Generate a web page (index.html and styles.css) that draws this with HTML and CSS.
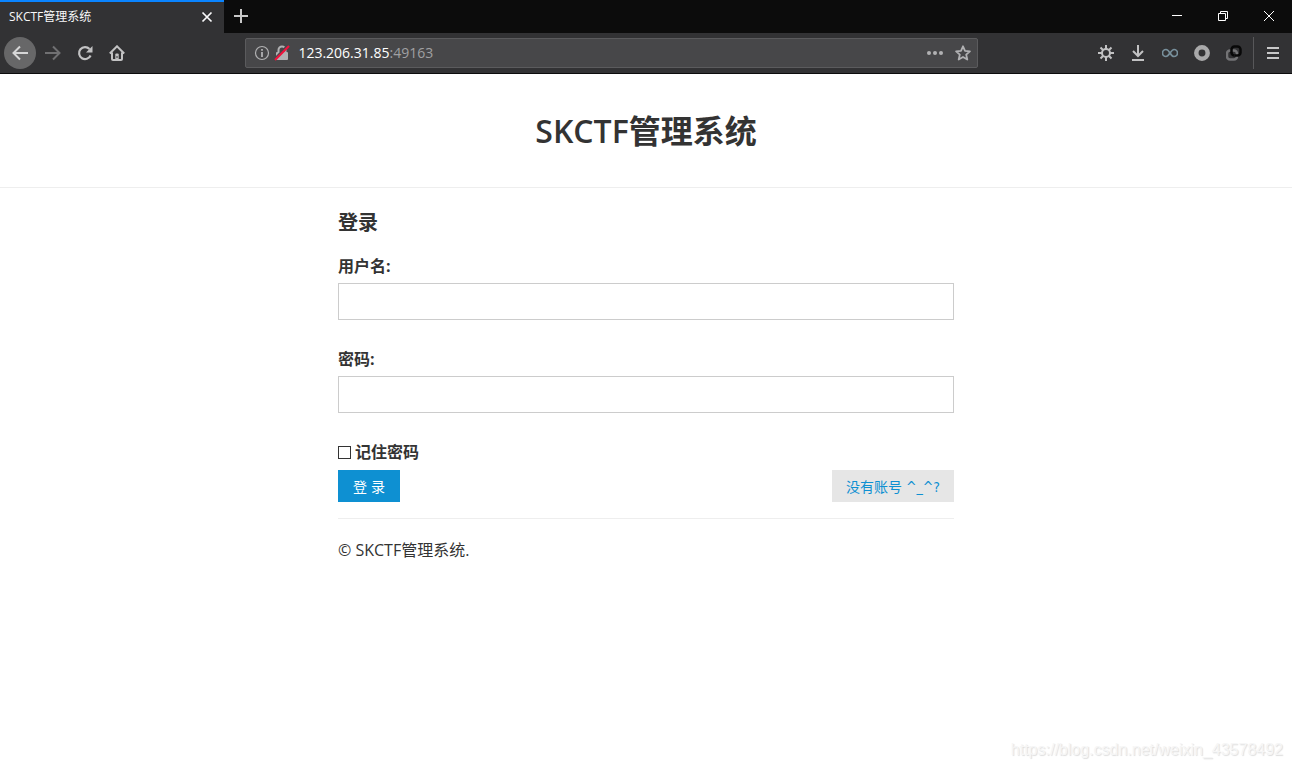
FILE: index.html
```html
<!DOCTYPE html>
<html lang="zh-CN">
<head>
    <meta charset="UTF-8">
    <meta name="viewport" content="width=device-width, initial-scale=1.0">
    <title>SKCTF管理系统</title>
    <link rel="stylesheet" href="styles.css">
</head>
<body>
    <div class="browser">
        <div class="titlebar">
            <div class="tab">
                <span class="tab-title">SKCTF管理系统</span>
                <button type="button" class="icon-btn tab-close" aria-label="关闭标签页">
                    <svg width="16" height="16" viewBox="0 0 16 16"><path d="M3.5 2.5l9 9M12.5 2.5l-9 9" stroke="#f9f9fa" stroke-width="1.7"/></svg>
                </button>
            </div>
            <button type="button" class="icon-btn new-tab" aria-label="新标签页">
                <svg width="16" height="16" viewBox="0 0 16 16"><path d="M8 1v14M1 8h14" stroke="#c8c8c8" stroke-width="2"/></svg>
            </button>
            <div class="window-controls">
                <button type="button" class="icon-btn" aria-label="最小化">
                    <svg width="12" height="12" viewBox="0 0 12 12"><path d="M1 5.5h10" stroke="#fff"/></svg>
                </button>
                <button type="button" class="icon-btn" aria-label="还原">
                    <svg width="12" height="12" viewBox="0 0 12 12"><path d="M1.500 3.500h7v7h-7zM3.500 3.500v-2h7v7h-2" fill="none" stroke="#fff"/></svg>
                </button>
                <button type="button" class="icon-btn" aria-label="关闭">
                    <svg width="12" height="12" viewBox="0 0 12 12"><path d="M1 1l10 10M11 1L1 11" stroke="#fff"/></svg>
                </button>
            </div>
        </div>
        <div class="toolbar">
            <div class="nav-buttons">
                <button type="button" class="icon-btn back" aria-label="后退">
                    <svg width="16" height="16" viewBox="0 0 16 16"><path d="M16 8H1.500M8 1.500L1.500 8 8 14.500" fill="none" stroke="#d6d6d7" stroke-width="2"/></svg>
                </button>
                <button type="button" class="icon-btn" aria-label="前进">
                    <svg width="16" height="16" viewBox="0 0 16 16"><path d="M0 8h14.500M8 1.500L14.500 8 8 14.500" fill="none" stroke="#707072" stroke-width="2"/></svg>
                </button>
                <button type="button" class="icon-btn" aria-label="刷新">
                    <svg width="16" height="16" viewBox="0 0 16 16"><path d="M12.500 4A6 6 0 1 0 13.600 10.500" fill="none" stroke="#c2c2c3" stroke-width="2.200"/><path d="M15.500 1v6.500H9z" fill="#c2c2c3"/></svg>
                </button>
                <button type="button" class="icon-btn" aria-label="主页">
                    <svg width="16" height="16" viewBox="0 0 16 16"><path d="M.8 8.500L8 1.300l7.200 7.200M3 7.500V14a1 1 0 0 0 1 1h8a1 1 0 0 0 1-1V7.500" fill="none" stroke="#c2c2c3" stroke-width="2"/><path d="M6.300 15V9.500a1 1 0 0 1 1-1h1.400a1 1 0 0 1 1 1V15z" fill="#c2c2c3"/><path d="M8 11v2" stroke="#323234"/></svg>
                </button>
            </div>
            <div class="urlbar">
                <svg width="16" height="16" viewBox="0 0 16 16"><circle cx="8" cy="8" r="6.500" fill="none" stroke="#b1b1b3" stroke-width="1.200"/><path d="M8 7v5M8 4v1.800" stroke="#b1b1b3" stroke-width="1.800"/></svg>
                <svg width="16" height="16" viewBox="0 0 16 16"><path d="M4.500 8V5a3.500 3.500 0 0 1 7 0v3" fill="none" stroke="#b1b1b3" stroke-width="2"/><rect x="2" y="7" width="12" height="8" rx="1" fill="#b1b1b3"/><path d="M0 14.500L13.500 .5" stroke="#474749" stroke-width="2"/><path d="M1 15L15 1" stroke="#f0123c" stroke-width="2.200"/></svg>
                <div class="url"><span class="host">123.206.31.85</span>:49163</div>
                <button type="button" class="icon-btn" aria-label="页面操作">
                    <svg width="16" height="16" viewBox="0 0 16 16" fill="#b1b1b3"><circle cx="2" cy="8" r="2"/><circle cx="8" cy="8" r="2"/><circle cx="14" cy="8" r="2"/></svg>
                </button>
                <button type="button" class="icon-btn" aria-label="添加书签">
                    <svg width="16" height="16" viewBox="0 0 16 16"><path d="M8 1.300l2 4.500 4.900.5-3.700 3.300 1.100 4.900L8 12l-4.300 2.500 1.100-4.900L1.100 6.300 6 5.800z" fill="none" stroke="#b1b1b3" stroke-width="1.800" stroke-linejoin="round"/></svg>
                </button>
            </div>
            <div class="tools">
                <button type="button" class="icon-btn" aria-label="设置">
                    <svg width="16" height="16" viewBox="0 0 16 16" fill="none" stroke="#c2c2c3" stroke-width="2"><circle cx="8" cy="8" r="4"/><path d="M8 0v4M8 12v4M0 8h4M12 8h4M2.500 2.500L5 5M11 11l2.500 2.500M13.500 2.500L11 5M5 11l-2.500 2.500"/></svg>
                </button>
                <button type="button" class="icon-btn" aria-label="下载">
                    <svg width="16" height="16" viewBox="0 0 16 16"><path d="M8 0v10.500M3 6l5 5 5-5M2 15h12" fill="none" stroke="#c2c2c3" stroke-width="2"/></svg>
                </button>
                <button type="button" class="icon-btn" aria-label="无限扩展">
                    <svg width="16" height="16" viewBox="0 0 16 16"><path d="M8 8C6.500 5.500 5.500 4.500 4 4.500a3.500 3.500 0 0 0 0 7C7 11.500 9 4.500 12 4.500a3.500 3.500 0 0 1 0 7c-1.500 0-2.500-1-4-3.500" fill="none" stroke="#78909c" stroke-width="1.700"/></svg>
                </button>
                <button type="button" class="icon-btn" aria-label="圆环扩展">
                    <svg width="16" height="16" viewBox="0 0 16 16"><circle cx="8" cy="8" r="5.700" fill="none" stroke="#a9a9aa" stroke-width="4.500"/></svg>
                </button>
                <button type="button" class="icon-btn" aria-label="链接扩展">
                    <svg width="16" height="16" viewBox="0 0 16 16" fill="none" stroke-width="2.500"><rect x="1" y="5.500" width="10" height="9" rx="3" stroke="#737375"/><path d="M5.500 8V4.500a3 3 0 0 1 3-3h3a3 3 0 0 1 3 3v3a3 3 0 0 1-3 3h-3" stroke="#080808"/><path d="M5.500 7.500a3 3 0 0 0 3 3" stroke="#080808"/></svg>
                </button>
            </div>
            <button type="button" class="icon-btn menu" aria-label="菜单">
                <svg width="16" height="16" viewBox="0 0 16 16"><path d="M2 3h12M2 8h12M2 13h12" stroke="#c8c8c9" stroke-width="2"/></svg>
            </button>
        </div>
    </div>

    <header class="header">
        <h1><span class="latin">SKCTF</span>管理系统</h1>
    </header>
    <main class="container">
        <h3>登录</h3>
        <form class="login-form">
            <div class="field">
                <label for="user">用户名:</label>
                <input type="text" id="user" name="user">
            </div>
            <div class="field">
                <label for="password">密码:</label>
                <input type="password" id="password" name="password">
            </div>
            <div class="remember">
                <input type="checkbox" id="remember">
                <label for="remember">记住密码</label>
            </div>
            <div class="actions">
                <button type="submit" class="btn btn-primary">登 录</button>
                <button type="button" class="btn btn-default">没有账号 ^_^?</button>
            </div>
        </form>
        <footer class="footer">
            <p>© SKCTF管理系统.</p>
        </footer>
    </main>
    <div class="watermark">https://blog.csdn.net/weixin_43578492</div>
</body>
</html>
```
FILE: styles.css
```css
* {
    box-sizing: border-box;
}
body {
    margin: 0;
    min-height: 100vh;
    background-color: #fff;
    color: #333;
    font-family: "Open Sans", "Noto Sans CJK SC", sans-serif;
    font-size: 16px;
    line-height: 26px;
}
button, input {
    font-family: inherit;
}
svg {
    display: block;
    flex: none;
}

/* browser window */
.icon-btn {
    display: flex;
    align-items: center;
    justify-content: center;
    width: 32px;
    height: 32px;
    padding: 0;
    border: none;
    background: none;
}
.titlebar {
    display: flex;
    height: 33px;
    background-color: #0c0c0c;
}
.tab {
    display: flex;
    align-items: center;
    justify-content: space-between;
    width: 224px;
    padding-left: 9px;
    border-top: 2px solid #0a84ff;
    background-color: #323234;
    color: #f9f9fa;
    font-size: 12px;
}
.tab-title {
    line-height: 30px;
    align-self: flex-start;
}
.tab-close {
    width: 34px;
}
.new-tab {
    width: 34px;
}
.window-controls {
    display: flex;
    margin-left: auto;
}
.window-controls .icon-btn {
    width: 46px;
}
.toolbar {
    display: flex;
    align-items: center;
    height: 41px;
    padding-left: 4px;
    border-bottom: 1px solid #0c0c0c;
    background-color: #323234;
}
.nav-buttons {
    display: flex;
    flex: 8 1 0;
}
.back {
    margin-right: 1px;
    border-radius: 50%;
    background-color: #676768;
}
.urlbar {
    display: flex;
    align-items: center;
    gap: 4px;
    flex: 0 1 733px;
    height: 30px;
    padding-left: 8px;
    border: 1px solid #5b5b5d;
    border-radius: 2px;
    background-color: #474749;
}
.urlbar .icon-btn {
    width: 24px;
}
.urlbar .icon-btn:last-child {
    margin-right: 2px;
}
.url {
    flex: 1;
    padding-left: 4px;
    color: #a0a0a2;
    font-size: 14px;
}
.host {
    color: #fff;
}
.tools {
    display: flex;
    justify-content: flex-end;
    flex: 9 1 0;
    padding-right: 3px;
}
.menu {
    width: 39px;
    border-left: 1px solid #58585a;
}

/* login page */
.header {
    padding: 36px 0 35px;
    border-bottom: 1px solid #eee;
    text-align: center;
}
h1 {
    margin: 0;
    font-size: 32px;
    font-weight: bold;
    line-height: 42px;
}
.latin {
    font-weight: 600;
}
.container {
    width: 50%;
    margin: 0 auto;
    padding: 22px 15px 0;
}
h3 {
    margin: 0 0 17px;
    font-size: 20px;
    font-weight: bold;
}
label {
    font-weight: bold;
}
.field {
    display: flex;
    flex-direction: column;
    gap: 4px;
    margin-bottom: 26px;
}
.field input {
    width: 100%;
    height: 37px;
    padding: 8px;
    border: 1px solid #ccc;
    font-size: 16px;
}
.remember {
    display: flex;
    align-items: center;
    gap: 4px;
}
.remember input {
    appearance: none;
    width: 13px;
    height: 13px;
    margin: 0;
    border: 1px solid #333;
    background-color: #fff;
}
.remember input:checked {
    background-color: #0e90d2;
}
.actions {
    display: flex;
    justify-content: space-between;
    margin-top: 5px;
    padding-bottom: 16px;
    border-bottom: 1px solid #eee;
}
.btn {
    height: 32px;
    padding: 0 14px;
    border: none;
    font-family: "DejaVu Sans Condensed", "Noto Sans CJK SC", sans-serif;
    font-size: 14px;
    cursor: pointer;
}
.btn-primary {
    padding: 0 15px;
    background-color: #0e90d2;
    color: #fff;
}
.btn-default {
    background-color: #e6e6e6;
    color: #0e90d2;
}
.footer p {
    margin: 18px 0;
}
.watermark {
    position: absolute;
    right: 9px;
    bottom: 5px;
    color: #f6f6f6;
    font-family: "Liberation Sans", Arial, sans-serif;
    font-size: 16px;
    text-shadow: 1px 1px 1px #ddd;
}
```
